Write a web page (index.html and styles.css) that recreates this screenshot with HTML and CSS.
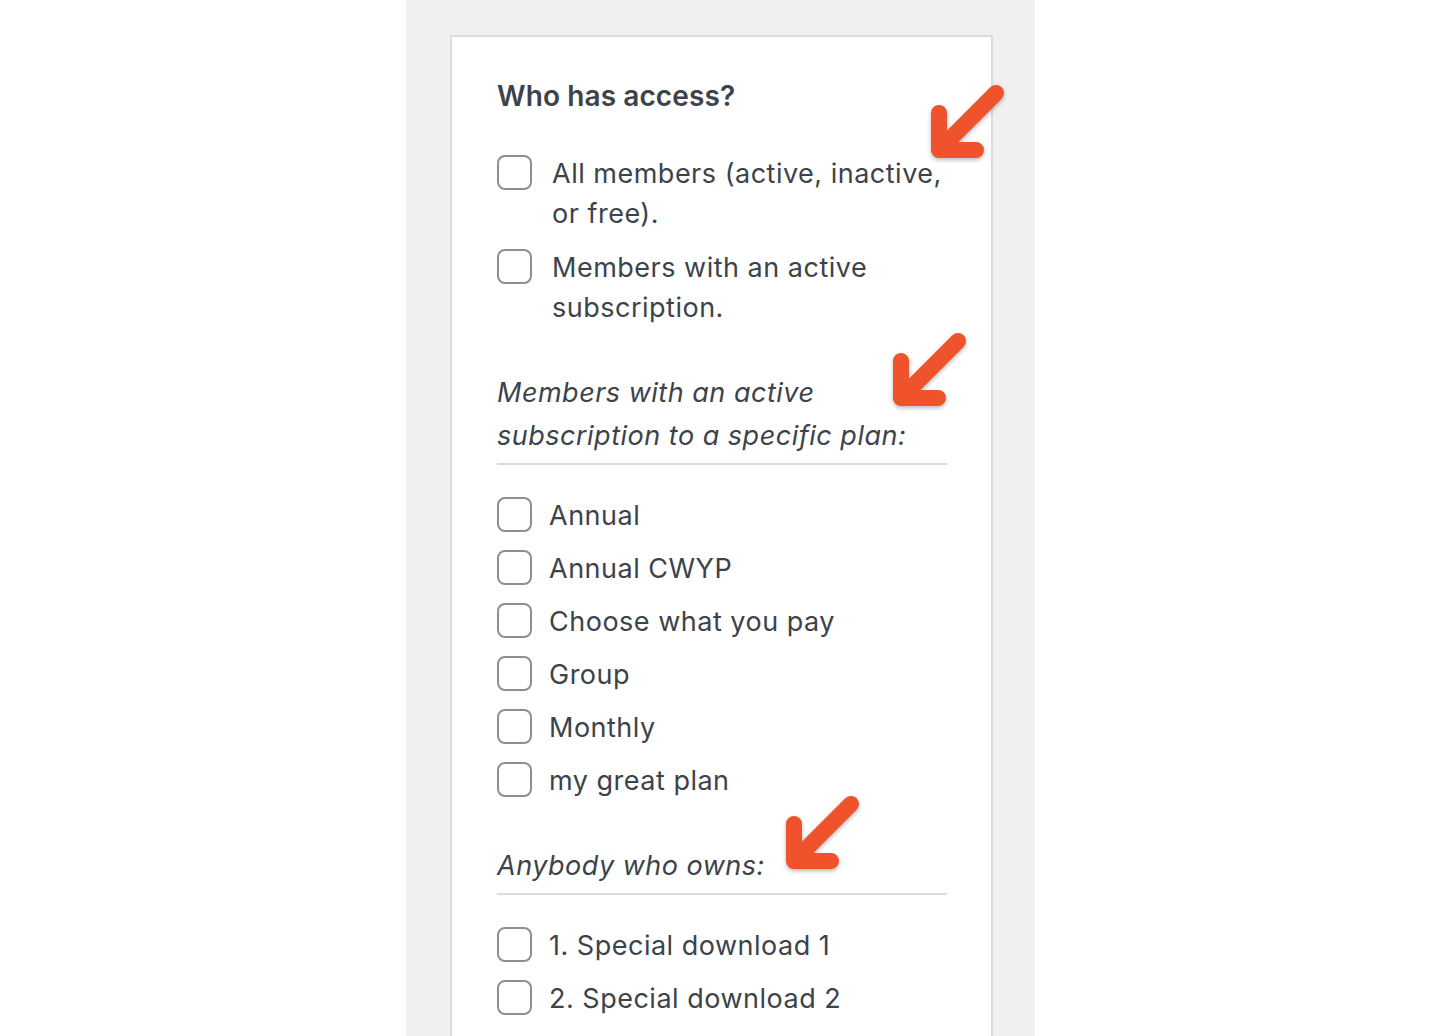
FILE: index.html
```html
<!DOCTYPE html>
<html lang="en">
<head>
<meta charset="utf-8">
<title>Who has access?</title>
<link rel="stylesheet" href="styles.css">
</head>
<body>
<div class="page">
  <div class="card">
    <h2 class="title">Who has access?</h2>
    <ul class="options options-main">
      <li class="option"><span class="box"></span><span class="label label-wide">All members (active, inactive, or free).</span></li>
      <li class="option"><span class="box"></span><span class="label label-wide">Members with an active subscription.</span></li>
    </ul>
    <p class="group-title">Members with an active subscription to a specific plan:</p>
    <ul class="options options-list">
      <li class="option"><span class="box"></span><span class="label">Annual</span></li>
      <li class="option"><span class="box"></span><span class="label">Annual CWYP</span></li>
      <li class="option"><span class="box"></span><span class="label">Choose what you pay</span></li>
      <li class="option"><span class="box"></span><span class="label">Group</span></li>
      <li class="option"><span class="box"></span><span class="label">Monthly</span></li>
      <li class="option"><span class="box"></span><span class="label">my great plan</span></li>
    </ul>
    <p class="group-title group-title-single">Anybody who owns:</p>
    <ul class="options options-list">
      <li class="option"><span class="box"></span><span class="label">1. Special download 1</span></li>
      <li class="option"><span class="box"></span><span class="label">2. Special download 2</span></li>
    </ul>
  </div>
  <svg class="arrow arrow-1" width="74" height="74" viewBox="0 0 74 74" aria-hidden="true"><path d="M8 28 L8 65 L45 65 M8 65 L65 8"/></svg>
  <svg class="arrow arrow-2" width="74" height="74" viewBox="0 0 74 74" aria-hidden="true"><path d="M8 28 L8 65 L45 65 M8 65 L65 8"/></svg>
  <svg class="arrow arrow-3" width="74" height="74" viewBox="0 0 74 74" aria-hidden="true"><path d="M8 28 L8 65 L45 65 M8 65 L65 8"/></svg>
</div>
</body>
</html>
```
FILE: styles.css
```css
html, body {
  margin: 0;
  padding: 0;
  background: #ffffff;
  height: 100%;
  overflow: hidden;
}
body {
  font-family: Inter, "Noto Sans", "Liberation Sans", sans-serif;
  color: #3c434a;
}
.page {
  position: relative;
  width: 629px;
  margin-left: calc(50% - 314px);
  min-height: 1036px;
  background: #f0f0f0;
  padding: 35px 42px 0 44px;
  box-sizing: border-box;
}
.card {
  background: #ffffff;
  border: 2px solid #dcdcde;
  border-bottom: none;
  padding: 40px 44px 0 45px;
  min-height: 1001px;
  box-sizing: border-box;
}
.title {
  margin: 0 0 39px;
  font-size: 28px;
  line-height: 38px;
  font-weight: 600;
  letter-spacing: 0.1px;
}
.options {
  list-style: none;
  margin: 0;
  padding: 0;
  display: flex;
  flex-direction: column;
}
.options-main {
  gap: 14px;
}
.options-list {
  gap: 13px;
  margin-top: 31px;
}
.option {
  display: flex;
  align-items: flex-start;
  font-size: 27px;
  line-height: 40px;
  letter-spacing: 0.5px;
}
.box {
  flex: none;
  width: 31px;
  height: 31px;
  margin-top: 1px;
  border: 2px solid #8c8f94;
  border-radius: 8px;
  background: #ffffff;
}
.label {
  margin-left: 17px;
}
.label-wide {
  margin-left: 20px;
}
.group-title {
  margin: 43px 0 0;
  padding-bottom: 6px;
  border-bottom: 2px solid #dcdcde;
  font-size: 27px;
  line-height: 43px;
  font-style: italic;
  letter-spacing: 0.5px;
  padding-right: 30px;
}
.options-list + .group-title {
  margin-top: 43px;
}
.arrow {
  position: absolute;
  overflow: visible;
  filter: drop-shadow(0 2px 2px rgba(0, 0, 0, 0.28));
}
.arrow path {
  fill: none;
  stroke: #f0522b;
  stroke-width: 16;
  stroke-linecap: round;
  stroke-linejoin: round;
}
.arrow-1 { left: 525px; top: 85px; }
.arrow-2 { left: 487px; top: 333px; }
.arrow-3 { left: 380px; top: 796px; }
```
